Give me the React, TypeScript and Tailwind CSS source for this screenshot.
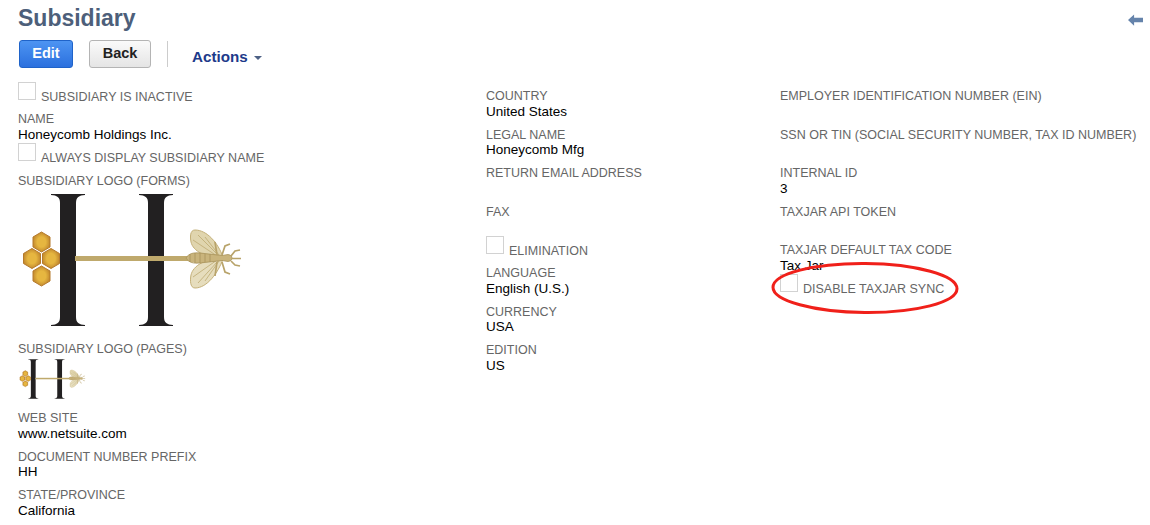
import React from 'react';

const Logo = ({ id, className }: { id: string; className?: string }) => (
  <svg viewBox="0 0 225 140" className={className}>
    <defs>
      <radialGradient id={id}>
        <stop offset="0.5" stopColor="#e6b640" />
        <stop offset="1" stopColor="#c38a2e" />
      </radialGradient>
    </defs>
    {/* the two serif stems of the H */}
    <path d="M33 4h34v1c-6 .5-9 2-9 8v114c0 6 3 7.500 9 8v1H33v-1c6-.5 9-2 9-8V13c0-6-3-7.500-9-8z" fill="#222021" />
    <path d="M121 4h34v1c-6 .5-9 2-9 8v114c0 6 3 7.500 9 8v1h-34v-1c6-.5 9-2 9-8V13c0-6-3-7.500-9-8z" fill="#222021" />
    <rect x="57" y="66" width="115" height="5" fill="#bfa96c" />
    {/* honeycomb */}
    <g fill={`url(#${id})`} stroke="#b57a2c" strokeWidth="1">
      <path d="M23.500 42l8.500 5v10l-8.500 5-8.500-5V47z" />
      <path d="M14 58.500l8.500 5v10l-8.500 5-8.500-5v-10z" />
      <path d="M33 58.500l8.500 5v10l-8.500 5-8.500-5v-10z" />
      <path d="M23.500 76l8.500 5v10l-8.500 5-8.500-5V81z" />
    </g>
    {/* moth */}
    <g>
      <path d="M205 67c-5-14-16-27-28-27-5 0-5 7-4 12 2 9 14 16 32 15z" fill="#e0d5ae" stroke="#c4b078" />
      <path d="M205 69c-5 14-16 29-28 29-5 0-5-8-4-13 2-9 14-17 32-16z" fill="#e6ddbd" stroke="#c4b078" />
      <path d="M180 45l20 20M175 50l24 16M187 47l14 18M180 93l20-22M175 87l24-17M187 91l14-20" stroke="#bda971" strokeWidth=".8" fill="none" />
      <path d="M168 68c3-5 8-5.500 14-5l22 2.500 6-1c3 .5 4 2 4 3.500s-1 3-4 3.500l-6-1-22 2.500c-6 .5-11 0-14-5z" fill="#c9b47c" stroke="#a8935b" strokeWidth=".8" />
      <path d="M172 64v8M177 63v10M182 63v10M187 64v8M192 64v8" stroke="#a8935b" strokeWidth=".8" fill="none" />
      <path d="M199 65l-2-13M204 65l3-9 5-2M199 72l-2 14M204 72l3 10 5 2M213 66l4-5 5-1M214 68.500h9M213 71l4 4 5 1" stroke="#b8a36a" strokeWidth="1.700" fill="none" />
    </g>
  </svg>
);

const Field = ({ label, value }: { label: string; value?: string }) => (
  <div className="h-[38.5px]">
    <div className="text-[#666] h-[15.5px]">{label}</div>
    {value && <div className="text-black text-[13.5px] h-[15.5px] -mt-[1px]">{value}</div>}
  </div>
);

const Check = ({ label }: { label: string }) => (
  <div className="flex items-end text-[#666] h-[19px]">
    <span className="w-[18px] h-[18px] mb-[3px] border border-[#d2d2d2] bg-white shrink-0" />
    <span className="ml-[5px] leading-[15px] -mb-[2px]">{label}</span>
  </div>
);

export default function App() {
  return (
    <div className="relative w-[1150px] h-[525px] overflow-hidden bg-white pl-[18px] text-[12.5px] leading-[15.5px] font-['Liberation_Sans',Arial,sans-serif]">
      {/* Title */}
      <div className="flex items-center justify-between h-[37px] pt-[1px]">
        <h1 className="text-[23px] font-bold text-[#4d5f7a]">Subsidiary</h1>
        <svg viewBox="0 0 16 12" className="w-[15px] h-[12px] mr-[7px] mt-[1px]">
          <path d="M0 6l6.500-6v3.500H16v5H6.500V12z" fill="#6583ab" />
        </svg>
      </div>

      {/* Buttons */}
      <div className="flex items-center h-[31px] mt-[1px] pl-[1px]">
        <button className="w-[54px] h-[28px] rounded-[3px] border border-[#1f63c9] bg-gradient-to-b from-[#4d94f2] to-[#2b70de] text-white text-[14.5px] font-bold">
          Edit
        </button>
        <button className="w-[62px] h-[28px] ml-[16px] rounded-[3px] border border-[#b4b4b4] bg-gradient-to-b from-[#fafafa] to-[#e5e5e5] text-[#222] text-[14.5px] font-bold">
          Back
        </button>
        <div className="w-px h-[26px] ml-[16px] bg-[#ccc]" />
        <div className="flex items-center ml-[24px] mt-[7px] text-[#1d3a8a] text-[15.2px] font-bold">
          Actions
          <span className="ml-[6px] mt-[2px] border-x-[4px] border-t-[4px] border-x-transparent border-t-[#4d6185]" />
        </div>
      </div>

      {/* Form columns */}
      <div className="flex mt-[15px]">
        <div className="w-[468px] shrink-0">
          <Check label="SUBSIDIARY IS INACTIVE" />
          <div className="mt-[9px]">
            <Field label="NAME" value="Honeycomb Holdings Inc." />
          </div>
          <div className="-mt-[5.5px]">
            <Check label="ALWAYS DISPLAY SUBSIDIARY NAME" />
          </div>
          <div className="mt-[9.5px] text-[#666]">SUBSIDIARY LOGO (FORMS)</div>
          <Logo id="comb-forms" className="w-[225px] h-[140px] mt-[1px]" />
          <div className="mt-[12px] text-[#666]">SUBSIDIARY LOGO (PAGES)</div>
          <Logo id="comb-pages" className="w-[68px] h-[42px]" />
          <div className="mt-[11.5px]">
            <Field label="WEB SITE" value="www.netsuite.com" />
            <Field label="DOCUMENT NUMBER PREFIX" value="HH" />
            <Field label="STATE/PROVINCE" value="California" />
          </div>
        </div>

        <div className="w-[294px] shrink-0 pt-[5px]">
          <Field label="COUNTRY" value="United States" />
          <Field label="LEGAL NAME" value="Honeycomb Mfg" />
          <Field label="RETURN EMAIL ADDRESS" />
          <Field label="FAX" />
          <div className="h-[27px] -mt-[5px] mb-[1px]">
            <Check label="ELIMINATION" />
          </div>
          <Field label="LANGUAGE" value="English (U.S.)" />
          <Field label="CURRENCY" value="USA" />
          <Field label="EDITION" value="US" />
        </div>

        <div className="pt-[5px]">
          <Field label="EMPLOYER IDENTIFICATION NUMBER (EIN)" />
          <Field label="SSN OR TIN (SOCIAL SECURITY NUMBER, TAX ID NUMBER)" />
          <Field label="INTERNAL ID" value="3" />
          <Field label="TAXJAR API TOKEN" />
          <Field label="TAXJAR DEFAULT TAX CODE" value="Tax Jar" />
          <div className="-mt-[5.5px]">
            <Check label="DISABLE TAXJAR SYNC" />
          </div>
        </div>
      </div>

      {/* Hand-drawn annotation over the sync checkbox */}
      <svg viewBox="0 0 190 54" className="absolute left-[770px] top-[261px] w-[190px] h-[54px] pointer-events-none">
        <ellipse cx="95" cy="27" rx="92" ry="24.5" fill="none" stroke="#f0201a" strokeWidth="3" transform="rotate(0.5 95 27)" />
      </svg>
    </div>
  );
}
